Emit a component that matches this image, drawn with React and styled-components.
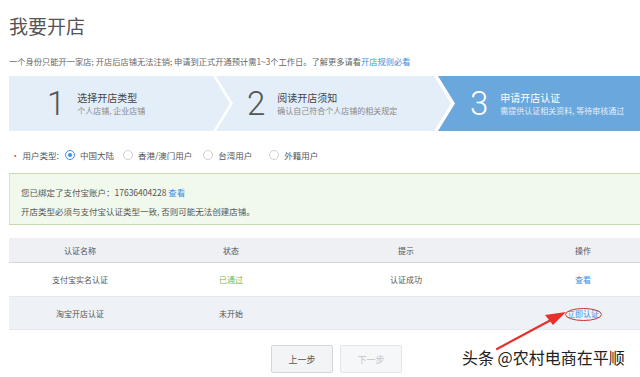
import React from 'react'
import styled, { createGlobalStyle } from 'styled-components'

const GlobalStyle = createGlobalStyle`
  body {
    margin: 0;
    background: #fff;
    font-family: "Noto Sans CJK SC", "Noto Sans", sans-serif;
    overflow: hidden;
  }
`

const Page = styled.div`
  position: relative;
  width: 640px;
  height: 377px;
  overflow: hidden;
`

const Content = styled.div`
  width: 656px;
  padding: 14px 0 0 9px;
`

const Title = styled.h1`
  margin: 0;
  font-size: 19px;
  line-height: 24px;
  font-weight: 400;
  color: #555;
`

const Desc = styled.p`
  margin: 17px 0 0;
  font-size: 8.25px;
  line-height: 12px;
  color: #666;
  white-space: nowrap;
`

const Link = styled.a`
  color: #3a8ee6;
  text-decoration: none;
`

const Steps = styled.div`
  display: flex;
  height: 55px;
  margin-top: 9px;
`

const Step = styled.div`
  display: flex;
  align-items: center;
  flex: ${p => (p.$last ? '1' : 'none')};
  width: ${p => p.$width}px;
  margin-left: ${p => p.$offset || 0}px;
  padding-left: ${p => p.$pad}px;
  box-sizing: border-box;
  background: ${p => (p.$active ? '#6aa7dc' : '#e4eef9')};
  clip-path: ${p =>
    p.$last
      ? 'polygon(0 0, 100% 0, 100% 100%, 0 100%, 17px 50%)'
      : p.$first
      ? 'polygon(0 0, calc(100% - 17px) 0, 100% 50%, calc(100% - 17px) 100%, 0 100%)'
      : 'polygon(0 0, calc(100% - 17px) 0, 100% 50%, calc(100% - 17px) 100%, 0 100%, 17px 50%)'};
`

const StepNum = styled.span`
  font-family: Roboto, "Liberation Sans", sans-serif;
  font-weight: 300;
  font-size: 33px;
  line-height: 1;
  color: ${p => (p.$active ? '#fff' : '#555')};
  margin-right: 12px;
`

const StepText = styled.div`
  display: flex;
  flex-direction: column;
  gap: 1px;
`

const StepTitle = styled.div`
  font-size: 10px;
  line-height: 13px;
  color: ${p => (p.$active ? '#fff' : '#444')};
`

const StepSub = styled.div`
  font-size: 8px;
  line-height: 12px;
  color: ${p => (p.$active ? '#e2eefa' : '#888')};
  white-space: nowrap;
`

const TypeRow = styled.div`
  display: flex;
  align-items: center;
  height: 16px;
  margin-top: 16px;
  font-size: 8.5px;
  color: #555;
`

const Label = styled.span`
  margin-left: 2px;
  margin-right: 6px;
  &::before {
    content: '•';
    color: #e4393c;
    margin-right: 3px;
  }
`

const RadioItem = styled.label`
  display: flex;
  align-items: center;
  margin-right: ${p => p.$gap}px;
`

const Radio = styled.span`
  width: 10px;
  height: 10px;
  box-sizing: border-box;
  border-radius: 50%;
  border: 1px solid ${p => (p.$checked ? '#3a8ee6' : '#d0d0d0')};
  margin-right: 5px;
  display: flex;
  align-items: center;
  justify-content: center;
  &::after {
    content: '';
    display: ${p => (p.$checked ? 'block' : 'none')};
    width: 4px;
    height: 4px;
    border-radius: 50%;
    background: #3a8ee6;
  }
`

const Notice = styled.div`
  margin-top: 10px;
  height: 52px;
  box-sizing: border-box;
  border-top: 1px solid #c6d9b1;
  border-bottom: 1px solid #c6d9b1;
  border-left: 1px solid #d6e5c6;
  background: #f1f8ec;
  padding: 9px 0 0 11px;
  font-size: 8.5px;
  color: #555;
  line-height: 19px;
`

const Table = styled.div`
  margin-top: 13px;
  font-size: 8px;
  color: #555;
`

const Row = styled.div`
  display: grid;
  grid-template-columns: 142px 160px 190px 1fr;
  align-items: center;
  height: ${p => p.$h}px;
  background: ${p => p.$bg};
  border-bottom: 1px solid ${p => p.$line || '#e6e8eb'};
  box-sizing: border-box;
`

const Cell = styled.div`
  text-align: center;
  color: ${p => p.$color || '#555'};
`

const Buttons = styled.div`
  display: flex;
  gap: 7px;
  margin: 15px 0 0 262px;
`

const Button = styled.button`
  width: 62px;
  height: 28px;
  border: 1px solid ${p => (p.disabled ? '#e3e6e9' : '#d3d7db')};
  background: ${p => (p.disabled ? '#f6f7f9' : '#f2f4f6')};
  color: ${p => (p.disabled ? '#c4c4c4' : '#555')};
  font-family: inherit;
  font-size: 9px;
  border-radius: 2px;
  padding: 0;
`

const Watermark = styled.div`
  position: absolute;
  left: 462px;
  top: 345px;
  font-size: 16px;
  line-height: 24px;
  color: #222;
  white-space: nowrap;
  text-shadow: 0 0 2px #fff;
`

const Overlay = styled.svg`
  position: absolute;
  left: 0;
  top: 0;
  pointer-events: none;
`

const types = [
  { name: '中国大陆', checked: true, gap: 9 },
  { name: '香港/澳门用户', gap: 11 },
  { name: '台湾用户', gap: 17 },
  { name: '外籍用户', gap: 0 },
]

const rows = [
  { name: '支付宝实名认证', status: '已通过', statusColor: '#7ab648', tip: '认证成功', op: '查看', bg: '#fff', h: 34 },
  { name: '淘宝开店认证', status: '未开始', tip: '', op: '立即认证', bg: '#eef1f5', h: 33 },
]

export default function App() {
  return (
    <Page>
      <GlobalStyle />
      <Content>
        <Title>我要开店</Title>
        <Desc>
          一个身份只能开一家店; 开店后店铺无法注销; 申请到正式开通预计需1~3个工作日。了解更多请看<Link>开店规则必看</Link>
        </Desc>

        <Steps>
          <Step $first $width={221} $pad={38}>
            <StepNum>1</StepNum>
            <StepText>
              <StepTitle>选择开店类型</StepTitle>
              <StepSub>个人店铺, 企业店铺</StepSub>
            </StepText>
          </Step>
          <Step $width={235} $offset={-14} $pad={31}>
            <StepNum>2</StepNum>
            <StepText>
              <StepTitle>阅读开店须知</StepTitle>
              <StepSub>确认自己符合个人店铺的相关规定</StepSub>
            </StepText>
          </Step>
          <Step $last $active $offset={-13} $pad={32}>
            <StepNum $active>3</StepNum>
            <StepText>
              <StepTitle $active>申请开店认证</StepTitle>
              <StepSub $active>需提供认证相关资料, 等待审核通过</StepSub>
            </StepText>
          </Step>
        </Steps>

        <TypeRow>
          <Label>用户类型:</Label>
          {types.map(t => (
            <RadioItem key={t.name} $gap={t.gap}>
              <Radio $checked={t.checked} />
              {t.name}
            </RadioItem>
          ))}
        </TypeRow>

        <Notice>
          <div>您已绑定了支付宝账户：17636404228 <Link>查看</Link></div>
          <div>开店类型必须与支付宝认证类型一致, 否则可能无法创建店铺。</div>
        </Notice>

        <Table>
          <Row $h={25} $bg="#eef0f3" $line="#d3d6da">
            <Cell>认证名称</Cell>
            <Cell>状态</Cell>
            <Cell>提示</Cell>
            <Cell>操作</Cell>
          </Row>
          {rows.map(r => (
            <Row key={r.name} $h={r.h} $bg={r.bg}>
              <Cell>{r.name}</Cell>
              <Cell $color={r.statusColor}>{r.status}</Cell>
              <Cell>{r.tip}</Cell>
              <Cell $color="#3a8ee6">{r.op}</Cell>
            </Row>
          ))}
        </Table>

        <Buttons>
          <Button>上一步</Button>
          <Button disabled>下一步</Button>
        </Buttons>
      </Content>

      <Overlay width="640" height="377" viewBox="0 0 640 377">
        <ellipse cx="583.5" cy="314.5" rx="18" ry="6" fill="none" stroke="#c0392b" strokeWidth="1" />
        <path d="M497 349 L551 320" stroke="#e8302a" strokeWidth="2.2" strokeLinecap="round" />
        <path d="M566 312 L545 315 L553 325 Z" fill="#e8302a" />
      </Overlay>
      <Watermark>头条 @农村电商在平顺</Watermark>
    </Page>
  )
}
